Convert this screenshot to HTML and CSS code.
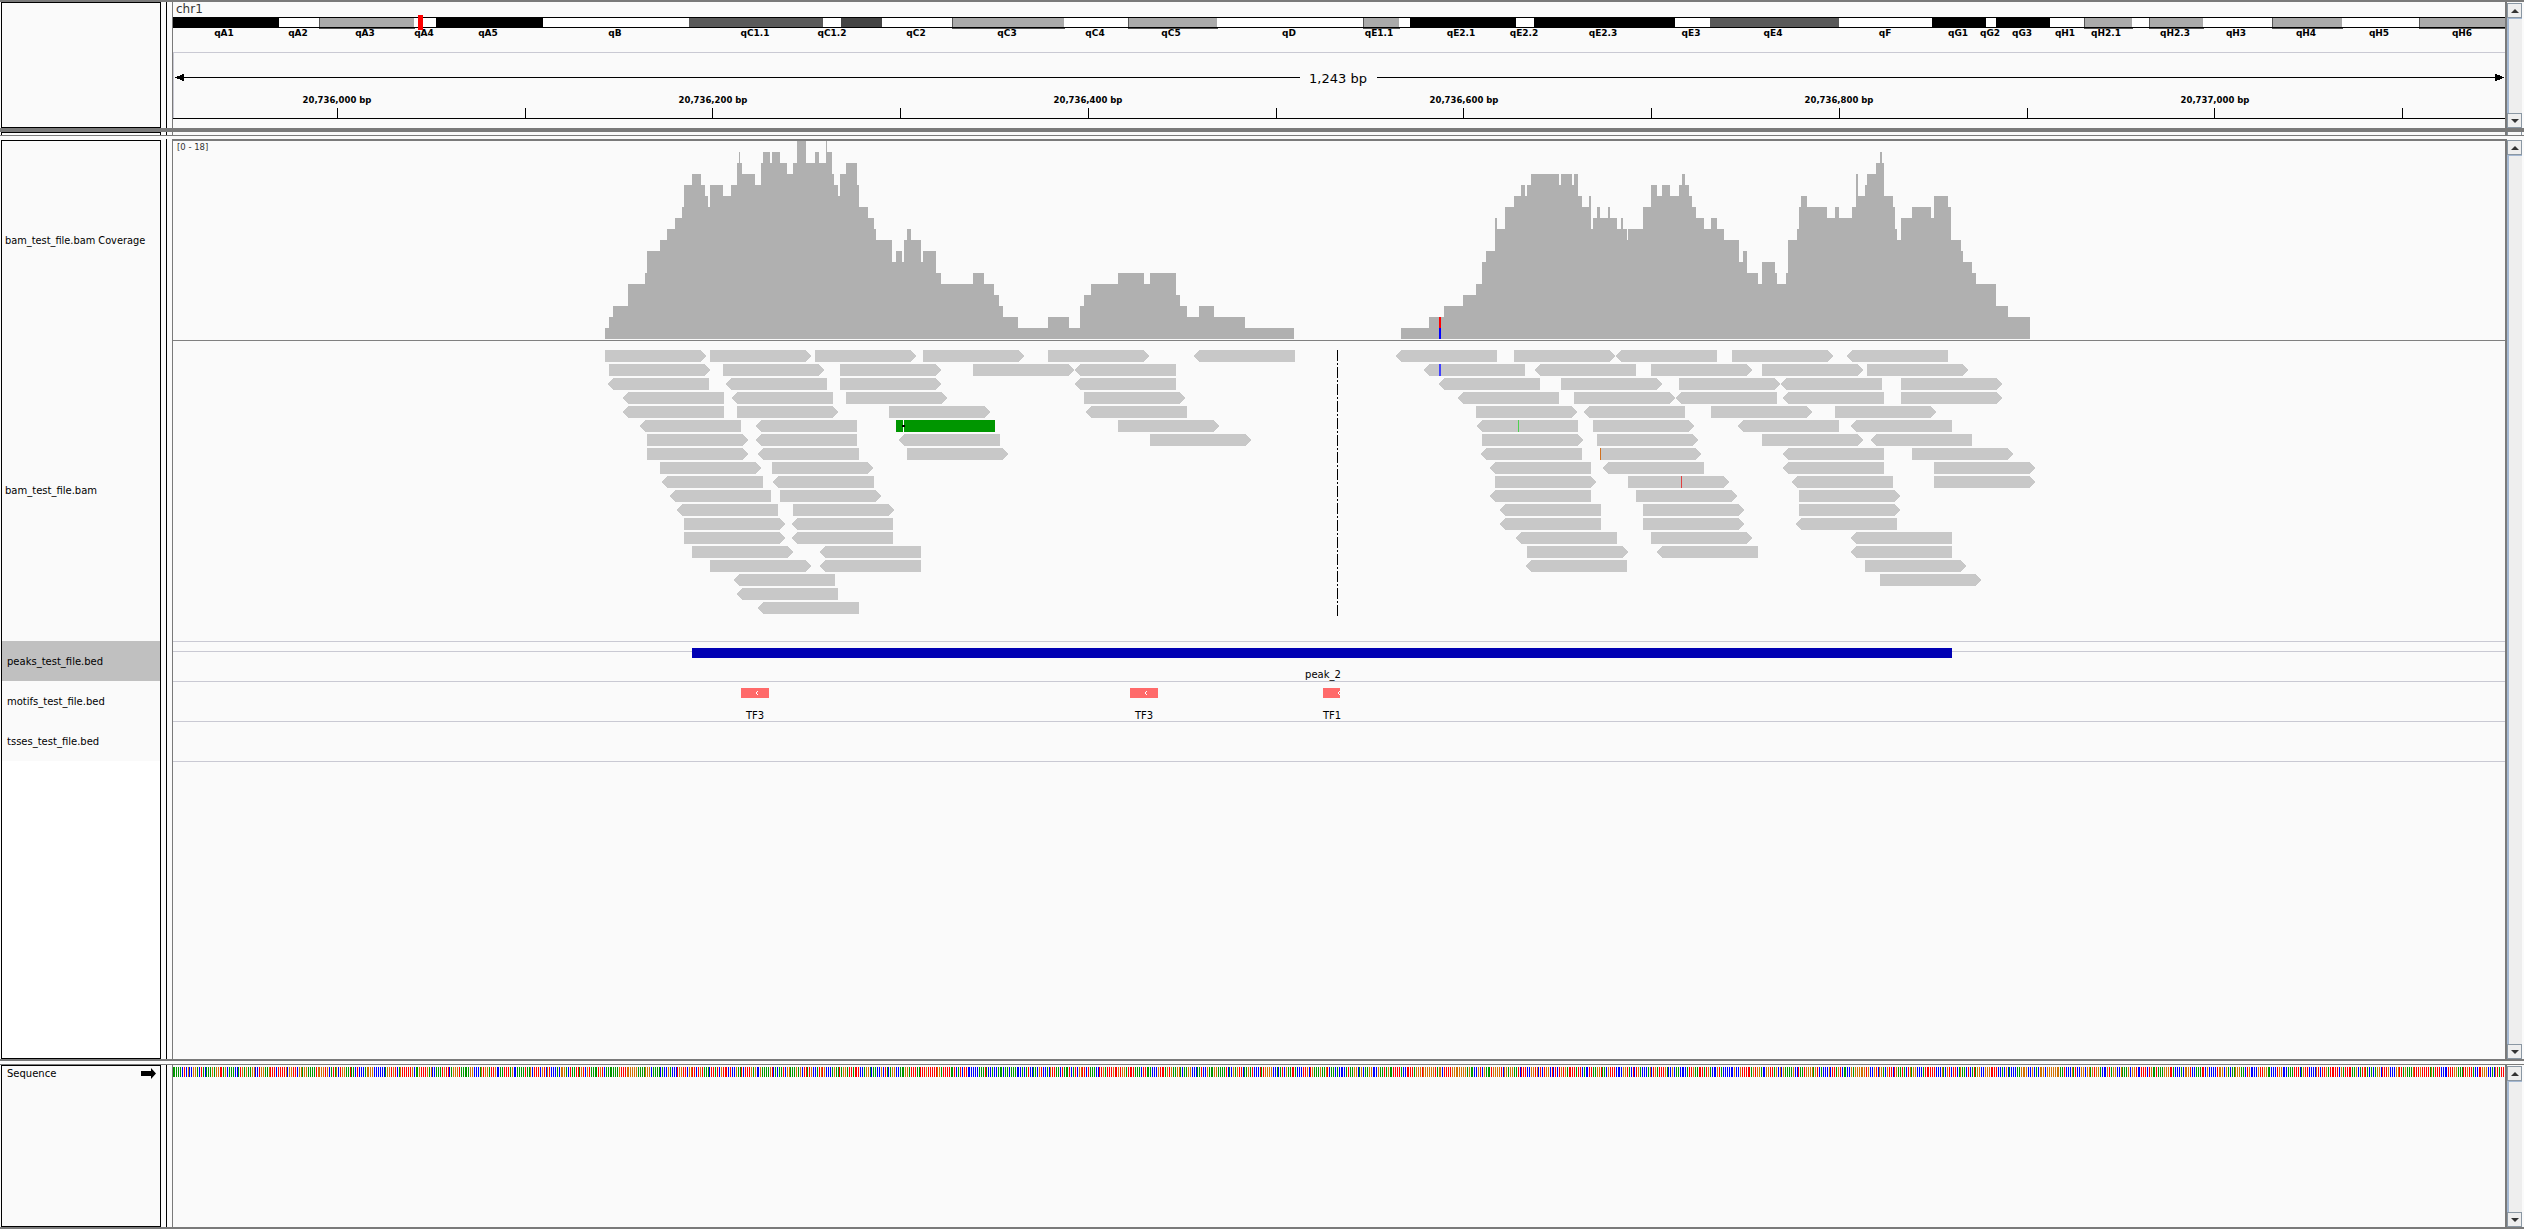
FILE: index.html
```html
<!DOCTYPE html>
<html>
	<head>
		<meta charset="UTF-8">
		<title>IGV</title>
		<link rel="stylesheet" href="styles.css">
	</head>
	<body>
		<div class="row row-header">
			<div class="names"></div>
			<div class="attr"></div>
			<div class="data">
				<svg class="canvas" width="2332" height="126" viewBox="173 2 2332 126">
					<text class="chr-name" x="176" y="13">chr1</text>
					<!-- ideogram -->
					<g class="bands">
						<rect class="b-black" x="173" y="17" width="106" height="11"/>
						<rect class="b-white" x="279" y="17" width="40" height="11"/>
						<rect class="b-gray" x="319" y="17" width="95" height="11"/>
						<rect class="b-white" x="414" y="17" width="22" height="11"/>
						<rect class="b-black" x="436" y="17" width="107" height="11"/>
						<rect class="b-white" x="543" y="17" width="146" height="11"/>
						<rect class="b-dark" x="689" y="17" width="134" height="11"/>
						<rect class="b-white" x="823" y="17" width="18" height="11"/>
						<rect class="b-darker" x="841" y="17" width="41" height="11"/>
						<rect class="b-white" x="882" y="17" width="70" height="11"/>
						<rect class="b-gray" x="952" y="17" width="112" height="11"/>
						<rect class="b-white" x="1064" y="17" width="64" height="11"/>
						<rect class="b-gray" x="1128" y="17" width="89" height="11"/>
						<rect class="b-white" x="1217" y="17" width="146" height="11"/>
						<rect class="b-gray" x="1363" y="17" width="36" height="11"/>
						<rect class="b-white" x="1399" y="17" width="11" height="11"/>
						<rect class="b-black" x="1410" y="17" width="106" height="11"/>
						<rect class="b-white" x="1516" y="17" width="18" height="11"/>
						<rect class="b-black" x="1534" y="17" width="141" height="11"/>
						<rect class="b-white" x="1675" y="17" width="35" height="11"/>
						<rect class="b-dark" x="1710" y="17" width="129" height="11"/>
						<rect class="b-white" x="1839" y="17" width="93" height="11"/>
						<rect class="b-black" x="1932" y="17" width="54" height="11"/>
						<rect class="b-white" x="1986" y="17" width="10" height="11"/>
						<rect class="b-black" x="1996" y="17" width="54" height="11"/>
						<rect class="b-white" x="2050" y="17" width="34" height="11"/>
						<rect class="b-gray" x="2084" y="17" width="48" height="11"/>
						<rect class="b-white" x="2132" y="17" width="17" height="11"/>
						<rect class="b-gray" x="2149" y="17" width="54" height="11"/>
						<rect class="b-white" x="2203" y="17" width="69" height="11"/>
						<rect class="b-gray" x="2272" y="17" width="70" height="11"/>
						<rect class="b-white" x="2342" y="17" width="77" height="11"/>
						<rect class="b-gray" x="2419" y="17" width="86" height="11"/>
					</g>
					<rect class="b-black" x="173" y="17" width="2332" height="1"/>
					<rect class="b-black" x="173" y="27" width="2332" height="1"/>
					<rect class="locus" x="418" y="15" width="5" height="15"/>
					<g class="band-labels">
						<text x="224" y="36">qA1</text>
						<text x="298" y="36">qA2</text>
						<text x="365" y="36">qA3</text>
						<text x="424" y="36">qA4</text>
						<text x="488" y="36">qA5</text>
						<text x="615" y="36">qB</text>
						<text x="755" y="36">qC1.1</text>
						<text x="832" y="36">qC1.2</text>
						<text x="916" y="36">qC2</text>
						<text x="1007" y="36">qC3</text>
						<text x="1095" y="36">qC4</text>
						<text x="1171" y="36">qC5</text>
						<text x="1289" y="36">qD</text>
						<text x="1379" y="36">qE1.1</text>
						<text x="1461" y="36">qE2.1</text>
						<text x="1524" y="36">qE2.2</text>
						<text x="1603" y="36">qE2.3</text>
						<text x="1691" y="36">qE3</text>
						<text x="1773" y="36">qE4</text>
						<text x="1885" y="36">qF</text>
						<text x="1958" y="36">qG1</text>
						<text x="1990" y="36">qG2</text>
						<text x="2022" y="36">qG3</text>
						<text x="2065" y="36">qH1</text>
						<text x="2106" y="36">qH2.1</text>
						<text x="2175" y="36">qH2.3</text>
						<text x="2236" y="36">qH3</text>
						<text x="2306" y="36">qH4</text>
						<text x="2379" y="36">qH5</text>
						<text x="2462" y="36">qH6</text>
					</g>
					<!-- ruler -->
					<rect class="soft-line" x="173" y="52" width="2332" height="1"/>
					<rect class="soft-line" x="173" y="52" width="1" height="66"/>
					<rect class="b-black" x="176" y="77" width="1124" height="1"/>
					<rect class="b-black" x="1377" y="77" width="1126" height="1"/>
					<polygon class="b-black" points="175,77.5 184,73.5 184,81.5"/>
					<polygon class="b-black" points="2504,77.5 2495,73.5 2495,81.5"/>
					<text class="span-label" x="1338" y="83">1,243 bp</text>
					<g class="tick-labels">
						<text x="337" y="103">20,736,000 bp</text>
						<text x="713" y="103">20,736,200 bp</text>
						<text x="1088" y="103">20,736,400 bp</text>
						<text x="1464" y="103">20,736,600 bp</text>
						<text x="1839" y="103">20,736,800 bp</text>
						<text x="2215" y="103">20,737,000 bp</text>
					</g>
					<g class="ticks">
						<rect x="337" y="108" width="1" height="10"/>
						<rect x="525" y="108" width="1" height="10"/>
						<rect x="712" y="108" width="1" height="10"/>
						<rect x="900" y="108" width="1" height="10"/>
						<rect x="1088" y="108" width="1" height="10"/>
						<rect x="1276" y="108" width="1" height="10"/>
						<rect x="1463" y="108" width="1" height="10"/>
						<rect x="1651" y="108" width="1" height="10"/>
						<rect x="1839" y="108" width="1" height="10"/>
						<rect x="2027" y="108" width="1" height="10"/>
						<rect x="2214" y="108" width="1" height="10"/>
						<rect x="2402" y="108" width="1" height="10"/>
					</g>
					<rect class="b-black" x="173" y="118" width="2332" height="1"/>
				</svg>
			</div>
			<div class="scroll">
				<div class="btn"><span class="arrow-up"></span></div>
				<div class="track"></div>
				<div class="btn"><span class="arrow-down"></span></div>
			</div>
		</div>
		<div class="row row-strip">
			<div class="names"></div>
			<div class="attr"></div>
			<div class="data"></div>
			<div class="scroll"></div>
		</div>
		<div class="row row-main">
			<div class="names">
				<div class="name name-coverage">bam_test_file.bam Coverage</div>
				<div class="name name-bam">bam_test_file.bam</div>
				<div class="name name-bed selected">peaks_test_file.bed</div>
				<div class="name name-bed">motifs_test_file.bed</div>
				<div class="name name-bed">tsses_test_file.bed</div>
				<div class="name-rest"></div>
			</div>
			<div class="attr"></div>
			<div class="data">
				<svg class="canvas" width="2332" height="918" viewBox="173 141 2332 918">
					<text class="range" x="177" y="150">[0 - 18]</text>
					<g id="coverage"></g>
					<rect class="mid-line" x="173" y="340" width="2332" height="1"/>
					<g id="reads"></g>
					<rect class="soft-line" x="173" y="641" width="2332" height="1"/>
					<rect class="soft-line" x="173" y="651" width="2332" height="1"/>
					<rect class="soft-line" x="173" y="681" width="2332" height="1"/>
					<rect class="soft-line" x="173" y="721" width="2332" height="1"/>
					<rect class="soft-line" x="173" y="761" width="2332" height="1"/>
					<rect class="peak" x="692" y="648" width="1260" height="10"/>
					<text class="feature" x="1323" y="678">peak_2</text>
					<rect class="motif" x="741" y="688" width="28" height="10"/>
					<polyline class="chevron" points="758,691 756,693 758,695"/>
					<text class="feature" x="755" y="719">TF3</text>
					<rect class="motif" x="1130" y="688" width="28" height="10"/>
					<polyline class="chevron" points="1147,691 1145,693 1147,695"/>
					<text class="feature" x="1144" y="719">TF3</text>
					<rect class="motif" x="1323" y="688" width="17" height="10"/>
					<polyline class="chevron" points="1340,691 1338,693 1340,695"/>
					<text class="feature" x="1332" y="719">TF1</text>
				</svg>
			</div>
			<div class="scroll">
				<div class="btn"><span class="arrow-up"></span></div>
				<div class="track"></div>
				<div class="btn"><span class="arrow-down"></span></div>
			</div>
		</div>
		<div class="row row-gap"></div>
		<div class="row row-seq">
			<div class="names">
				<div class="seq-head">
					<span>Sequence</span>
					<svg width="16" height="11" viewBox="0 0 16 11"><path d="M0 3h10V0l5 5.500-5 5.500V8H0z"/></svg>
				</div>
			</div>
			<div class="attr"></div>
			<div class="data">
				<svg class="canvas" width="2332" height="162" viewBox="173 1065 2332 162">
					<g id="sequence"></g>
				</svg>
			</div>
			<div class="scroll">
				<div class="btn"><span class="arrow-up"></span></div>
				<div class="track"></div>
				<div class="btn"><span class="arrow-down"></span></div>
			</div>
		</div>
		<script type="text/javascript" src="tracks.js"></script>
	</body>
</html>
```
FILE: styles.css
```css
html,body{
	margin: 0;
	padding: 0;
}
body{
	width: 2524px;
	height: 1229px;
	overflow: hidden;
	background: #fafafa;
	font-family: "DejaVu Sans", sans-serif;
	color: #000;
}
svg{
	display: block;
}
.row{
	display: flex;
}
.row-header{
	height: 126px;
	border-top: 2px solid #7a7a7a;
	border-bottom: 4px solid #7a7a7a;
}
.row-strip{
	height: 3px;
	margin-bottom: 3px;
	border-bottom: 1px solid #7a7a7a;
}
.row-main{
	height: 920px;
}
.row-gap{
	height: 6px;
	border-top: 2px solid #7a7a7a;
	box-sizing: border-box;
	border-bottom: 1px solid #7a7a7a;
}
.row-seq{
	height: 162px;
	border-bottom: 2px solid #7a7a7a;
}

/* left column */
.names{
	width: 158px;
	margin-left: 1px;
	border: 1px solid #000;
	background: #fafafa;
	flex: none;
}
.row-strip .names{
	border-bottom: 0;
}
.row-main .names{
	display: flex;
	flex-direction: column;
	margin-top: 1px;
	background: #fff;
}
.name{
	display: flex;
	align-items: center;
	padding-left: 3px;
	font-size: 10px;
	white-space: nowrap;
	background: #fafafa;
}
.name-coverage{
	height: 199px;
	font-size: 9.800px;
}
.name-bam{
	height: 301px;
}
.name-bed{
	height: 40px;
	padding-left: 5px;
}
.selected{
	background: #c0c0c0;
}
.name-rest{
	flex: 1;
}
.seq-head{
	display: flex;
	justify-content: space-between;
	padding: 2px 3px 0 5px;
	font-size: 10px;
	line-height: 12px;
}
.attr{
	flex: none;
	width: 5px;
	margin-left: 5px;
	border-left: 1px solid #000;
}
.data{
	flex: none;
	width: 2332px;
	border-left: 1px solid #7a7a7a;
	border-right: 2px solid #7a7a7a;
}
.row-main .data{
	border-top: 2px solid #7a7a7a;
}

/* scrollbars */
.scroll{
	flex: none;
	width: 15px;
	display: flex;
	flex-direction: column;
	padding-top: 1px;
	box-sizing: border-box;
}
.row-strip .scroll{
	padding-top: 0;
	border: 1px solid #8a97a3;
	border-top: 0;
	border-bottom: 0;
}
.btn{
	flex: none;
	height: 13px;
	border: 1px solid #8a97a3;
	background: #eeeeee;
	display: flex;
	align-items: center;
	justify-content: center;
}
.track{
	flex: 1;
	background: #eeeeee;
	border-left: 2px solid #a4b8d2;
	border-top: 1px solid #a4b8d2;
}
.arrow-up{
	border-left: 4px solid transparent;
	border-right: 4px solid transparent;
	border-bottom: 4px solid #333;
}
.arrow-down{
	border-left: 4px solid transparent;
	border-right: 4px solid transparent;
	border-top: 4px solid #333;
}

/* svg drawing */
.canvas rect,.canvas polygon{
	shape-rendering: crispEdges;
}
.b-black{
	fill: #000;
}
.b-white{
	fill: #fff;
}
.b-gray{
	fill: #aaaaaa;
	stroke: #555;
	stroke-width: 1;
}
.b-dark{
	fill: #5a5a5a;
}
.b-darker{
	fill: #444444;
}
.locus{
	fill: #ff0000;
}
.soft-line{
	fill: #c9c9d3;
}
.mid-line{
	fill: #808080;
}
.ticks rect{
	fill: #000;
}
.chr-name{
	font-size: 12px;
	fill: #333;
}
.band-labels text{
	font-size: 9px;
	font-weight: bold;
	text-anchor: middle;
}
.tick-labels text{
	font-size: 8.500px;
	font-weight: bold;
	text-anchor: middle;
}
.span-label{
	font-size: 13px;
	text-anchor: middle;
}
.range{
	font-size: 8.500px;
	fill: #333;
}
.feature{
	font-size: 10px;
	text-anchor: middle;
}
.cov{
	fill: #b0b0b0;
}
.read{
	fill: #c8c8c8;
}
.read-green{
	fill: #009600;
}
.peak{
	fill: #0000b4;
}
.motif{
	fill: #ff6a6a;
}
.chevron{
	fill: none;
	stroke: #fff;
	stroke-width: 1;
}
.deletion{
	stroke: #000;
	stroke-width: 1;
	stroke-dasharray: 11 2 2 2;
	shape-rendering: crispEdges;
}
```
FILE: tracks.js
```js
var NS = 'http://www.w3.org/2000/svg';

function add(parent,tag,cls,attrs){
	var el = document.createElementNS(NS,tag);
	if(cls){
		el.setAttribute('class',cls);
	}
	for(var k in attrs){
		el.setAttribute(k,attrs[k]);
	}
	parent.appendChild(el);
	return el;
}

//coverage: x,count pairs, the last one closes the run
var covLeft = [605,1,609,2,613,3,628,5,645,6,647,8,660,9,667,10,675,11,682,12,684,14,692,15,701,14,705,13,708,12,710,14,723,13,731,14,737,16,739,17,740,16,742,15,755,14,761,16,763,17,770,16,772,17,780,16,787,15,793,16,797,18,806,16,815,17,819,16,826,18,827,17,832,15,834,14,838,13,840,15,846,16,857,14,859,12,868,11,874,10,876,9,892,7,896,8,902,7,904,9,907,10,911,9,921,7,923,8,936,6,941,5,973,6,984,5,994,4,999,3,1003,2,1018,1,1048,2,1069,1,1080,3,1084,4,1091,5,1118,6,1144,5,1150,6,1176,4,1180,3,1187,2,1199,3,1214,2,1245,1,1294,0];
var covRight = [1401,1,1429,2,1444,3,1463,4,1476,5,1482,7,1486,8,1495,11,1497,10,1505,12,1514,13,1521,14,1525,13,1527,14,1531,15,1559,14,1561,15,1572,14,1574,15,1578,13,1582,12,1589,13,1591,10,1593,11,1597,12,1600,11,1608,12,1610,11,1617,10,1621,11,1623,10,1627,9,1628,10,1643,12,1651,14,1657,13,1662,14,1670,13,1679,14,1682,15,1685,14,1689,13,1692,12,1696,11,1704,10,1711,11,1717,10,1724,9,1739,7,1743,8,1747,6,1758,5,1762,7,1775,6,1777,5,1786,6,1788,9,1797,10,1799,12,1801,13,1807,12,1827,11,1835,12,1839,11,1852,12,1856,15,1858,13,1865,14,1867,15,1876,16,1880,17,1882,16,1884,13,1893,12,1895,10,1897,9,1901,11,1912,12,1931,11,1934,13,1948,12,1951,9,1961,8,1963,7,1972,6,1976,5,1996,3,2008,2,2030,0];

function drawCoverage(list){
	var box = document.getElementById('coverage');
	for(var i=0;i<list.length-2;i+=2){
		add(box,'rect','cov',{x:list[i],y:339-list[i+1]*11,width:list[i+2]-list[i],height:list[i+1]*11});
	}
}
drawCoverage(covLeft);
drawCoverage(covRight);
//the one position with mixed bases
var box = document.getElementById('coverage');
add(box,'rect','',{x:1439,y:317,width:2,height:11,fill:'#ff0000'});
add(box,'rect','',{x:1439,y:328,width:2,height:11,fill:'#0000ff'});

//reads per row: start x, negative means the arrow points left
var rows = [
	[605,710,815,923,1048,-1194,-1396,1514,-1616,1732,-1847],
	[609,723,840,973,-1075,-1424,-1535,1651,1762,1867],
	[-608,-726,840,-1075,-1439,1561,1679,-1781,1901],
	[-623,-732,846,1084,-1458,1574,-1676,-1783,1901],
	[-623,737,889,-1086,1476,-1584,1711,1835],
	[-640,-756,1118,-1477,1593,-1738,-1851],
	[647,-756,-899,1150,1482,1597,1762,-1871],
	[647,-758,907,-1481,1600,-1783,1912],
	[660,772,-1490,-1603,-1783,1934],
	[-662,-773,1495,1628,-1792,1934],
	[-670,780,-1490,1636,1799],
	[-677,793,-1500,1643,1799],
	[684,-792,-1500,1643,-1796],
	[684,-792,-1516,1651,-1851],
	[692,-820,1527,-1657,-1851],
	[710,-820,-1526,1865],
	[-734,1880],
	[-737],
	[-758]
];
var readBox = document.getElementById('reads');
for(var r=0;r<rows.length;r++){
	var y = 350+r*14;
	for(var n=0;n<rows[r].length;n++){
		var v = rows[r][n];
		var x = Math.abs(v);
		var pts;
		if(v>0){
			pts = [x,y,x+96,y,x+101,y+6,x+96,y+12,x,y+12];
		}else{
			pts = [x+5,y,x+101,y,x+101,y+12,x+5,y+12,x,y+6];
		}
		add(readBox,'polygon','read',{points:pts.join(' ')});
	}
}
//mismatches
var marks = [[1439,364,'#4040ff',2],[1518,420,'#50d050',1],[1600,448,'#d07020',1],[1681,476,'#e04040',1]];
for(var m=0;m<marks.length;m++){
	add(readBox,'rect','',{x:marks[m][0],y:marks[m][1],width:marks[m][3],height:12,fill:marks[m][2]});
}
//the green read has no arrow, insertion near its start
add(readBox,'rect','read-green',{x:896,y:420,width:99,height:12});
add(readBox,'rect','',{x:903,y:420,width:1,height:12,fill:'#ffffff'});
add(readBox,'rect','',{x:902,y:425,width:3,height:2,fill:'#000000'});
//deletion line
add(readBox,'line','deletion',{x1:1337.5,y1:350,x2:1337.5,y2:616});

//sequence colours, small generator so the bars stay the same each load
var colors = ['#009600','#0000ff','#d17105','#ff0000'];
var seqBox = document.getElementById('sequence');
var seed = 20736;
var last = 0;
for(var i=0;i<1243;i++){
	seed = (seed*1103515+12345)%2147483648;
	var pick = Math.floor(seed/65536)%5;
	var c = pick>3 ? last : pick;
	last = c;
	var bx = Math.floor(173+i*1.884);
	if(bx<2505){
		add(seqBox,'rect','',{x:bx,y:1067,width:1,height:10,fill:colors[c]});
	}
}
```
